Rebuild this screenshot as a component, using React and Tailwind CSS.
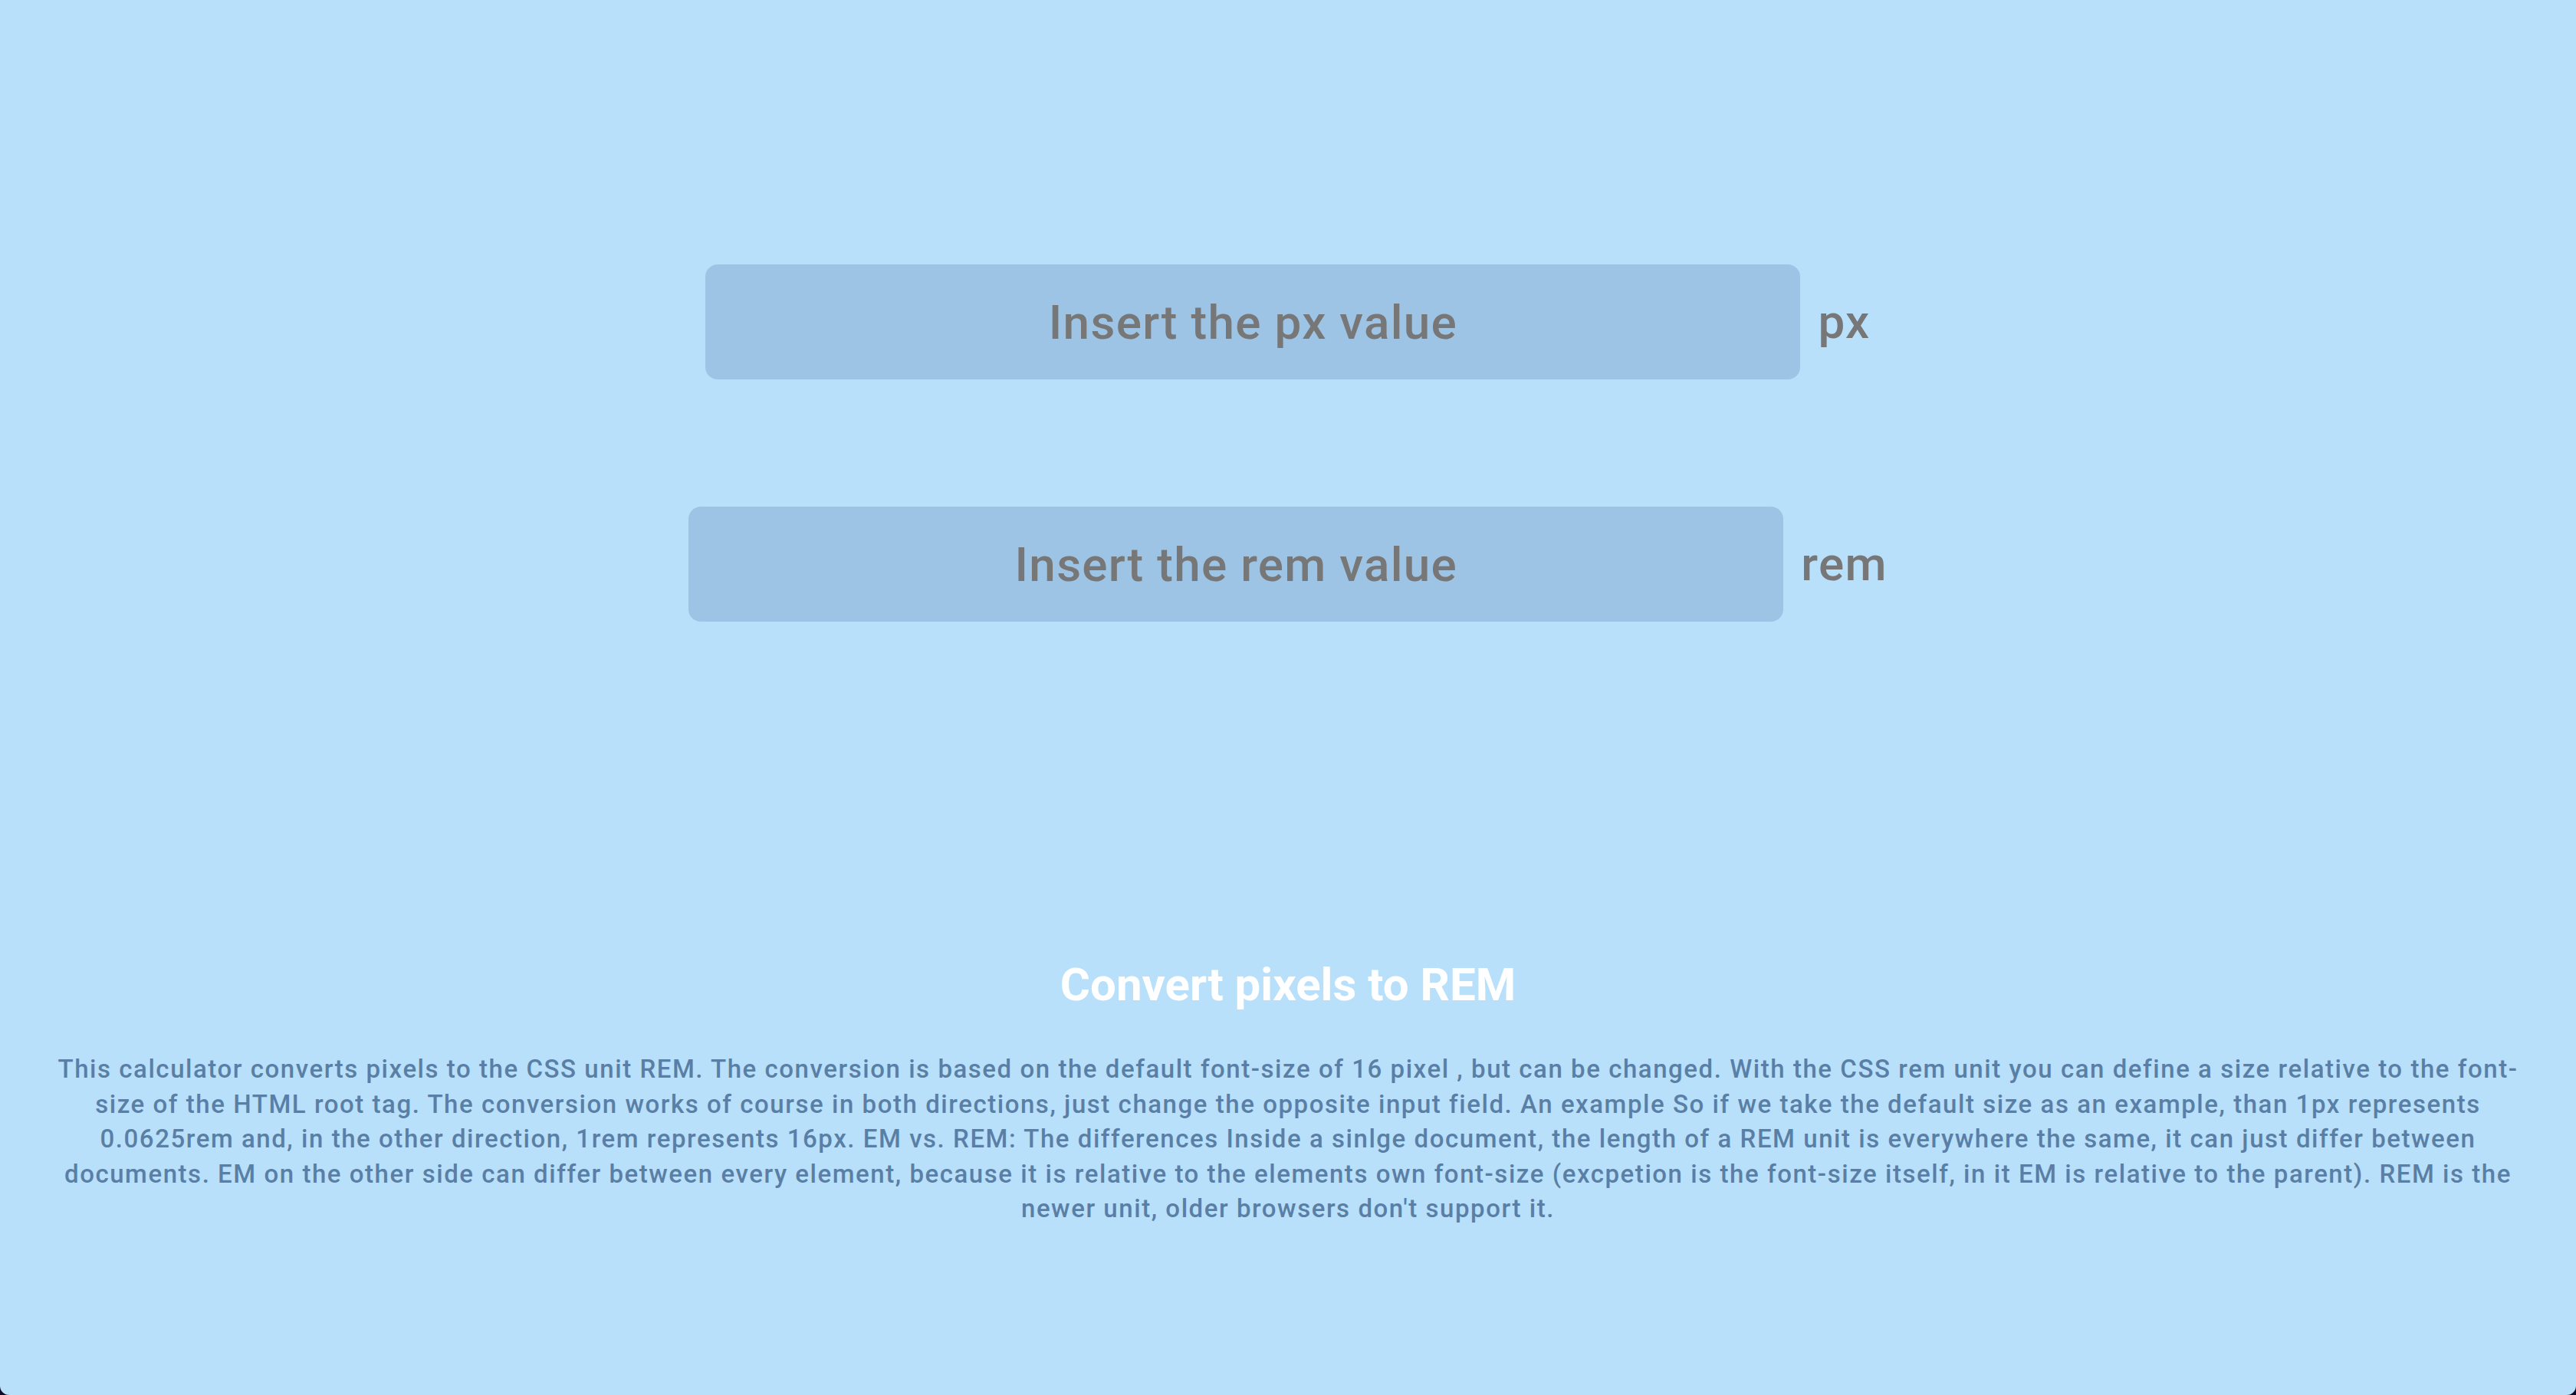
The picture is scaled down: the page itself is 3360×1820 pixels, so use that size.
import React from "react";

const font = { fontFamily: "Roboto, 'Liberation Sans', sans-serif" };

function Row({ placeholder, unit }) {
  return (
    <div className="flex items-center gap-[23px]">
      <input
        type="text"
        placeholder={placeholder}
        style={font}
        className="w-[1428px] h-[150px] rounded-[16px] bg-[#9dc4e4] text-center text-[62px] tracking-[1.3px] font-medium text-[#777777] placeholder:text-[#777777] outline-none border-0"
      />
      <span style={font} className="text-[62px] tracking-[1.3px] font-medium text-[#777777] leading-none">
        {unit}
      </span>
    </div>
  );
}

export default function App() {
  return (
    <div className="min-h-screen w-full bg-[#0f0b26]">
      <div
        style={font}
        className="h-[1820px] w-full bg-[#b9e0fb] rounded-b-[12px] flex flex-col items-center pt-[345px]"
      >
        <Row placeholder="Insert the px value" unit="px" />
        <div className="mt-[166px]">
          <Row placeholder="Insert the rem value" unit="rem" />
        </div>
        <h1 className="mt-[442px] text-[60px] leading-[64px] font-bold text-white text-center">
          Convert pixels to REM
        </h1>
        <p className="mt-[55px] px-[64px] text-[33px] tracking-[1.55px] leading-[45.5px] font-medium text-[#5a7fa6] text-center">
          This calculator converts pixels to the CSS unit REM. The conversion is based on the default font-size of 16 pixel , but can be changed. With the CSS rem unit you can define a size relative to the font-size of the HTML root tag. The conversion works of course in both directions, just change the opposite input field. An example So if we take the default size as an example, than 1px represents 0.0625rem and, in the other direction, 1rem represents 16px. EM vs. REM: The differences Inside a sinlge document, the length of a REM unit is everywhere the same, it can just differ between documents. EM on the other side can differ between every element, because it is relative to the elements own font-size (excpetion is the font-size itself, in it EM is relative to the parent). REM is the newer unit, older browsers don't support it.
        </p>
      </div>
    </div>
  );
}
